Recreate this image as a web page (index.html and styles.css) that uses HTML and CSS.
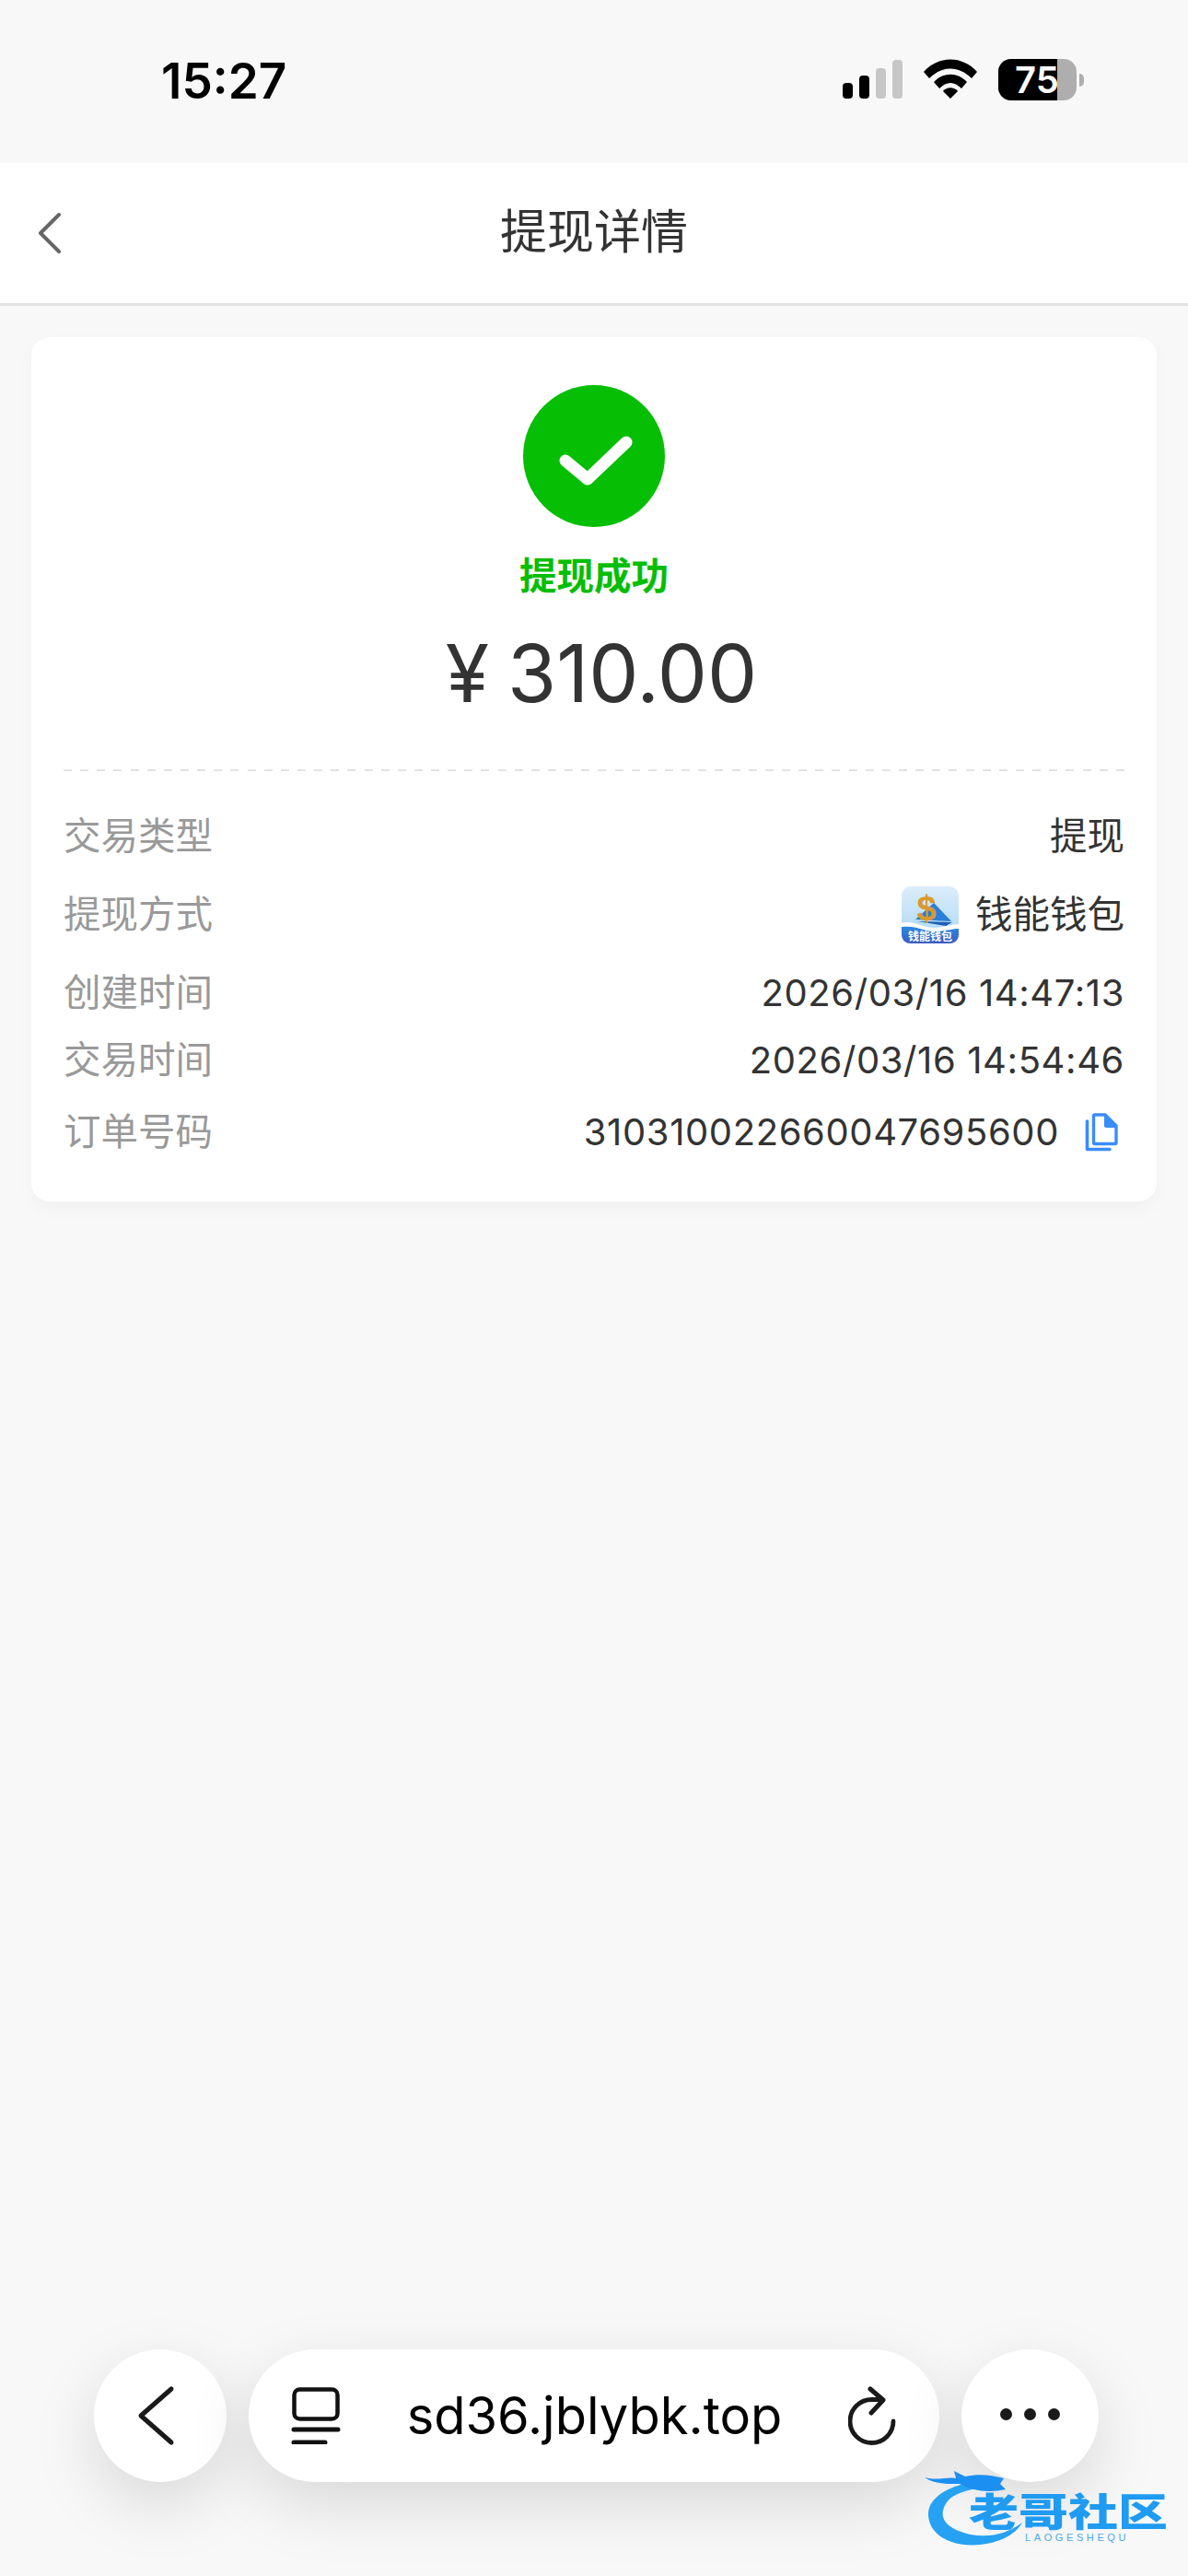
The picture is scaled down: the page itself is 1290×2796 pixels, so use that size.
FILE: index.html
```html
<!DOCTYPE html>
<html lang="zh-CN">
<head>
    <meta charset="UTF-8">
    <meta name="viewport" content="width=device-width, initial-scale=1.0">
    <title>提现详情</title>
    <link rel="stylesheet" href="styles.css">
</head>
<body>
    <div class="page">
        <!-- Status bar -->
        <div class="status-bar">
            <span class="clock">15:27</span>
            <div class="status-icons">
                <svg class="signal" width="66" height="42" viewBox="0 0 66 42">
                    <rect x="0" y="25" width="11" height="17" rx="4" fill="#000"/>
                    <rect x="18" y="17" width="11" height="25" rx="4" fill="#000"/>
                    <rect x="36" y="9" width="11" height="33" rx="4" fill="#c6c6c6"/>
                    <rect x="54" y="0" width="11" height="42" rx="4" fill="#c6c6c6"/>
                </svg>
                <svg class="wifi" width="58" height="43" viewBox="0 0 58 43">
                    <path d="M0 14 C16 -4 42 -4 58 14 L52 21 C38 7 20 7 6 21 Z" fill="#000"/>
                    <path d="M11 25 C21 14 37 14 47 25 L41 32 C33 24 25 24 17 32 Z" fill="#000"/>
                    <path d="M21 35 C25 30 33 30 37 35 L29 43 Z" fill="#000"/>
                </svg>
                <div class="battery">
                    <div class="battery-body">
                        <div class="battery-fill"></div>
                        <span class="battery-text">75</span>
                    </div>
                    <div class="battery-nub"></div>
                </div>
            </div>
        </div>

        <!-- Header -->
        <header class="nav-bar">
            <svg class="nav-back" width="30" height="46" viewBox="0 0 30 46">
                <path d="M26 3 L6 23 L26 43" fill="none" stroke="#666" stroke-width="4" stroke-linecap="round" stroke-linejoin="round"/>
            </svg>
            <h1 class="nav-title">提现详情</h1>
        </header>

        <!-- Detail card -->
        <main class="card">
            <div class="result">
                <svg class="result-icon" width="154" height="154" viewBox="0 0 154 154">
                    <circle cx="77" cy="77" r="77" fill="#06be04"/>
                    <path d="M46 82 L70 102 L112 62" fill="none" stroke="#fff" stroke-width="13" stroke-linecap="round" stroke-linejoin="round"/>
                </svg>
                <div class="result-text">提现成功</div>
                <div class="amount">¥ 310.00</div>
            </div>

            <div class="rows">
                <div class="row">
                    <span class="row-label">交易类型</span>
                    <span class="row-value">提现</span>
                </div>
                <div class="row row-method">
                    <span class="row-label">提现方式</span>
                    <span class="row-value">
                        <svg class="app-logo" width="62" height="62" viewBox="0 0 62 62">
                            <defs>
                                <linearGradient id="logoSky" x1="0" y1="0" x2="0" y2="1">
                                    <stop offset="0" stop-color="#dcedfb"/>
                                    <stop offset="1" stop-color="#a9d6f6"/>
                                </linearGradient>
                                <linearGradient id="logoSea" x1="0" y1="0" x2="0" y2="1">
                                    <stop offset="0" stop-color="#2a8be0"/>
                                    <stop offset="1" stop-color="#3d5cc0"/>
                                </linearGradient>
                            </defs>
                            <rect width="62" height="62" rx="10" fill="url(#logoSky)"/>
                            <path d="M35 18 L54 38 L15 36 Z" fill="#2a7fd6"/>
                            <path d="M17 38 L55 39 L48 43 Z" fill="#1c5fb8"/>
                            <text class="logo-dollar" x="27" y="37">$</text>
                            <path d="M0 40 C14 36 22 46 38 45 C48 44 56 41 62 41 L62 50 L0 50 Z" fill="#fff"/>
                            <path d="M0 44 C18 42 24 50 40 49 C50 48 56 46 62 46 L62 52 C62 58 58 62 52 62 L10 62 C4 62 0 58 0 52 Z" fill="url(#logoSea)"/>
                            <text class="logo-name" x="31" y="59">钱能钱包</text>
                        </svg>
                        钱能钱包
                    </span>
                </div>
                <div class="row">
                    <span class="row-label">创建时间</span>
                    <span class="row-value row-number">2026/03/16 14:47:13</span>
                </div>
                <div class="row">
                    <span class="row-label">交易时间</span>
                    <span class="row-value row-number">2026/03/16 14:54:46</span>
                </div>
                <div class="row row-order">
                    <span class="row-label">订单号码</span>
                    <span class="row-value row-number">
                        310310022660047695600
                        <svg class="copy-icon" width="36" height="42" viewBox="0 0 36 42">
                            <path d="M2.5 9 V39.5 H27" fill="none" stroke="#3a8cfb" stroke-width="3.6" stroke-linecap="round" stroke-linejoin="round"/>
                            <path d="M11 2 H22 L34 14 V32 Q34 33.5 32.5 33.5 H11 Q9.5 33.5 9.5 32 V3.5 Q9.5 2 11 2 Z" fill="none" stroke="#3a8cfb" stroke-width="3.4" stroke-linejoin="round"/>
                            <path d="M21 1 L35 14 V16 H23 Q21 16 21 14 Z" fill="#3a8cfb"/>
                        </svg>
                    </span>
                </div>
            </div>
        </main>

        <!-- Browser toolbar -->
        <nav class="toolbar">
            <div class="tool-btn tool-back">
                <svg width="50" height="70" viewBox="0 0 50 70">
                    <path d="M42 6 L9 35 L42 64" fill="none" stroke="#1a1a1a" stroke-width="5" stroke-linecap="round" stroke-linejoin="round"/>
                </svg>
            </div>
            <div class="address">
                <svg class="address-icon" width="54" height="62" viewBox="0 0 54 62">
                    <rect x="3.5" y="2.5" width="47" height="32" rx="6" fill="none" stroke="#111" stroke-width="4.5"/>
                    <path d="M3 46 H51 M3 60 H37" fill="none" stroke="#111" stroke-width="5" stroke-linecap="round"/>
                </svg>
                <span class="address-url">sd36.jblybk.top</span>
                <svg class="address-reload" width="54" height="64" viewBox="0 0 54 64">
                    <path d="M49 38 A23.5 23.5 0 1 1 26 14.5 H36" fill="none" stroke="#1a1a1a" stroke-width="4.8" stroke-linecap="round"/>
                    <path d="M24 3 L38 15 L25 29" fill="none" stroke="#1a1a1a" stroke-width="5" stroke-linecap="round" stroke-linejoin="round"/>
                </svg>
            </div>
            <div class="tool-btn tool-more">
                <span class="dot"></span>
                <span class="dot"></span>
                <span class="dot"></span>
            </div>
        </nav>

        <!-- Watermark -->
        <div class="watermark">
            <svg class="watermark-dragon" width="112" height="84" viewBox="0 0 112 84">
                <path d="M70 12 C30 14 3 30 4 50 C5 72 30 85 60 82 C80 80 98 72 106 58 C90 70 70 75 50 71 C26 66 12 54 24 36 C34 23 55 21 82 18 Z" fill="#27a2f2"/>
                <path d="M0 9 C14 13 24 8 34 10 L32 2 L44 8 C58 5 72 6 86 10 L82 16 L88 22 C70 26 52 24 38 16 C24 16 10 16 0 9 Z" fill="#1c8ff2"/>
            </svg>
            <span class="watermark-name">老哥社区</span>
            <span class="watermark-sub">LAOGESHEQU</span>
        </div>
    </div>
</body>
</html>
```

FILE: styles.css
```css
/* Global */
* {
    box-sizing: border-box;
}

body {
    margin: 0;
    padding: 0;
    font-family: "Inter", "Noto Sans CJK SC", sans-serif;
    background: #f8f8f8;
    color: #333;
}

.page {
    position: relative;
    width: 1290px;
    height: 2796px;
    display: flex;
    flex-direction: column;
    overflow: hidden;
}

/* Status bar */
.status-bar {
    height: 177px;
    padding: 64px 113px 0 175px;
    display: flex;
    justify-content: space-between;
    align-items: flex-start;
}

.clock {
    font-family: "Inter", sans-serif;
    font-size: 53px;
    font-weight: 600;
    line-height: 48px;
    color: #000;
}

.status-icons {
    display: flex;
    align-items: flex-end;
    height: 45px;
}

.signal {
    margin-right: 22px;
    margin-bottom: 2px;
}

.wifi {
    margin-right: 23px;
    margin-bottom: 2px;
}

.battery {
    display: flex;
    align-items: center;
}

.battery-body {
    position: relative;
    width: 85px;
    height: 45px;
    border-radius: 14px;
    background: #aeaeae;
}

.battery-fill {
    width: 64px;
    height: 100%;
    border-radius: 14px 0 0 14px;
    background: #000;
}

.battery-text {
    position: absolute;
    top: 0;
    left: 18px;
    font-size: 40px;
    font-weight: 600;
    line-height: 45px;
    color: #fff;
}

.battery-nub {
    width: 5px;
    height: 14px;
    margin-left: 3px;
    border-radius: 0 7px 7px 0;
    background: #aeaeae;
}

/* Header */
.nav-bar {
    position: relative;
    height: 155px;
    background: #fff;
    border-bottom: 3px solid #e2e2e2;
    display: flex;
    align-items: center;
    justify-content: center;
}

.nav-back {
    position: absolute;
    left: 38px;
    top: 53px;
}

.nav-title {
    margin: 0 0 3px;
    font-size: 51px;
    font-weight: 400;
    line-height: 60px;
    color: #333;
}

/* Card */
.card {
    margin: 34px 34px 0;
    padding: 52px 35px 44px;
    background: #fff;
    border-radius: 20px;
    box-shadow: 0 8px 20px rgba(0, 0, 0, 0.03);
}

/* The divider dashes are longer than a browser's dashed border */
.result {
    display: flex;
    flex-direction: column;
    align-items: center;
    padding-bottom: 56px;
    background: repeating-linear-gradient(to right, #e2e2e2 0, #e2e2e2 9px, transparent 9px, transparent 18.14px) left bottom / 100% 2px no-repeat;
}

.result-icon {
    display: block;
}

.result-text {
    margin-top: 30px;
    font-size: 40.5px;
    font-weight: 700;
    line-height: 48px;
    color: #06be04;
}

.amount {
    margin-top: 31px;
    padding-left: 16px;
    font-size: 86px;
    font-weight: 400;
    line-height: 100px;
    word-spacing: -4px;
    color: #333;
}

.rows {
    padding-top: 44px;
    display: flex;
    flex-direction: column;
    gap: 20px;
}

.row {
    min-height: 53px;
    display: flex;
    justify-content: space-between;
    align-items: center;
    font-size: 40.5px;
    line-height: 53px;
}

.row-method {
    min-height: 77px;
}

.row-order {
    min-height: 63px;
}

.row-label {
    color: #999;
}

.row-value {
    display: flex;
    align-items: center;
    color: #333;
}

.row-number {
    font-size: 40px;
    letter-spacing: 0.6px;
}

.app-logo {
    margin-right: 18px;
}

.logo-dollar {
    font-family: "Liberation Sans", sans-serif;
    font-size: 38px;
    font-weight: 700;
    fill: #d99a2e;
    text-anchor: middle;
}

.logo-name {
    font-family: "Noto Sans CJK SC", sans-serif;
    font-size: 12px;
    font-weight: 700;
    fill: #fff;
    text-anchor: middle;
}

.copy-icon {
    margin-left: 28px;
    margin-right: 7px;
}

/* Browser toolbar */
.toolbar {
    margin-top: auto;
    margin-bottom: 102px;
    padding-left: 102px;
    display: flex;
    gap: 24px;
}

.tool-btn,
.address {
    height: 144px;
    background: #fff;
    box-shadow: 0 24px 70px rgba(0, 0, 0, 0.13);
}

.tool-btn {
    border-radius: 50%;
    display: flex;
    align-items: center;
    justify-content: center;
}

.tool-back {
    width: 144px;
    padding-right: 10px;
}

.tool-more {
    width: 149px;
    gap: 13px;
    padding-bottom: 4px;
}

.dot {
    width: 13px;
    height: 13px;
    border-radius: 50%;
    background: #1a1a1a;
}

.address {
    width: 750px;
    padding: 0 45px 0 46px;
    border-radius: 72px;
    display: flex;
    align-items: center;
    justify-content: space-between;
}

.address-url {
    font-family: "Inter", sans-serif;
    font-size: 56px;
    color: #000;
}

/* Watermark over the toolbar */
.watermark {
    position: absolute;
    left: 1004px;
    top: 2680px;
    width: 270px;
    height: 90px;
}

.watermark-dragon {
    position: absolute;
    left: 0;
    top: 0;
}

.watermark-name {
    position: absolute;
    left: 48px;
    top: 27px;
    font-size: 54px;
    font-weight: 900;
    line-height: 40px;
    white-space: nowrap;
    color: #1f9bf2;
    transform: scaleY(0.78);
    filter: blur(0.5px);
}

.watermark-sub {
    position: absolute;
    left: 109px;
    top: 68px;
    font-family: "Liberation Sans", sans-serif;
    font-size: 11px;
    line-height: 12px;
    letter-spacing: 3.6px;
    color: #4aa9ee;
}
```
